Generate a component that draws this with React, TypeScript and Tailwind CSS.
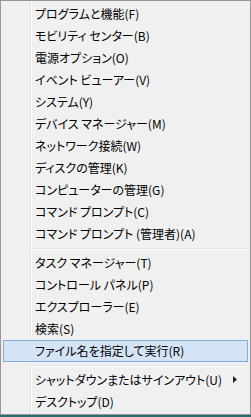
import React from "react";

type Item = { label: string; active?: boolean; submenu?: boolean } | "sep";

const items: Item[] = [
  { label: "プログラムと機能(F)" },
  { label: "モビリティ センター(B)" },
  { label: "電源オプション(O)" },
  { label: "イベント ビューアー(V)" },
  { label: "システム(Y)" },
  { label: "デバイス マネージャー(M)" },
  { label: "ネットワーク接続(W)" },
  { label: "ディスクの管理(K)" },
  { label: "コンピューターの管理(G)" },
  { label: "コマンド プロンプト(C)" },
  { label: "コマンド プロンプト (管理者)(A)" },
  "sep",
  { label: "タスク マネージャー(T)" },
  { label: "コントロール パネル(P)" },
  { label: "エクスプローラー(E)" },
  { label: "検索(S)" },
  { label: "ファイル名を指定して実行(R)", active: true },
  "sep",
  { label: "シャットダウンまたはサインアウト(U)", submenu: true },
  { label: "デスクトップ(D)" },
];

const App = () => {
  return (
    <div className="w-[251px] h-[417px] bg-[#2b6e6f] font-['Noto_Sans_CJK_JP',sans-serif] text-[12px] text-black [font-feature-settings:'palt']">
      <div className="h-[415px] border border-[#979797] bg-[#f0f0f0] bg-[linear-gradient(to_right,#f0f0f0_29px,#e2e3e3_29px,#e2e3e3_30px,#ffffff_30px,#ffffff_31px,#f0f0f0_31px)] px-[2px] pt-[2px] pb-[1px]">
        {items.map((item, i) =>
          item === "sep" ? (
            <div key={i} className="h-[7px] pt-[3px] pl-[28px] pr-[1px]">
              <div className="h-px bg-[#e2e3e3]" />
              <div className="h-px bg-white" />
            </div>
          ) : (
            <div
              key={i}
              className={
                item.active
                  ? "h-[22px] flex items-center pl-[31px] pr-[10px] border border-[#84ace0] bg-[#d5e4f4]"
                  : "h-[22px] flex items-center pl-[32px] pr-[11px]"
              }
            >
              <span className="flex-1 whitespace-nowrap leading-none">{item.label}</span>
              {item.submenu && (
                <svg width="4" height="7" viewBox="0 0 4 7" className="mb-[1px]">
                  <path d="M0 0 L4 3.5 L0 7 Z" fill="#222" />
                </svg>
              )}
            </div>
          )
        )}
      </div>
    </div>
  );
};

export default App;
